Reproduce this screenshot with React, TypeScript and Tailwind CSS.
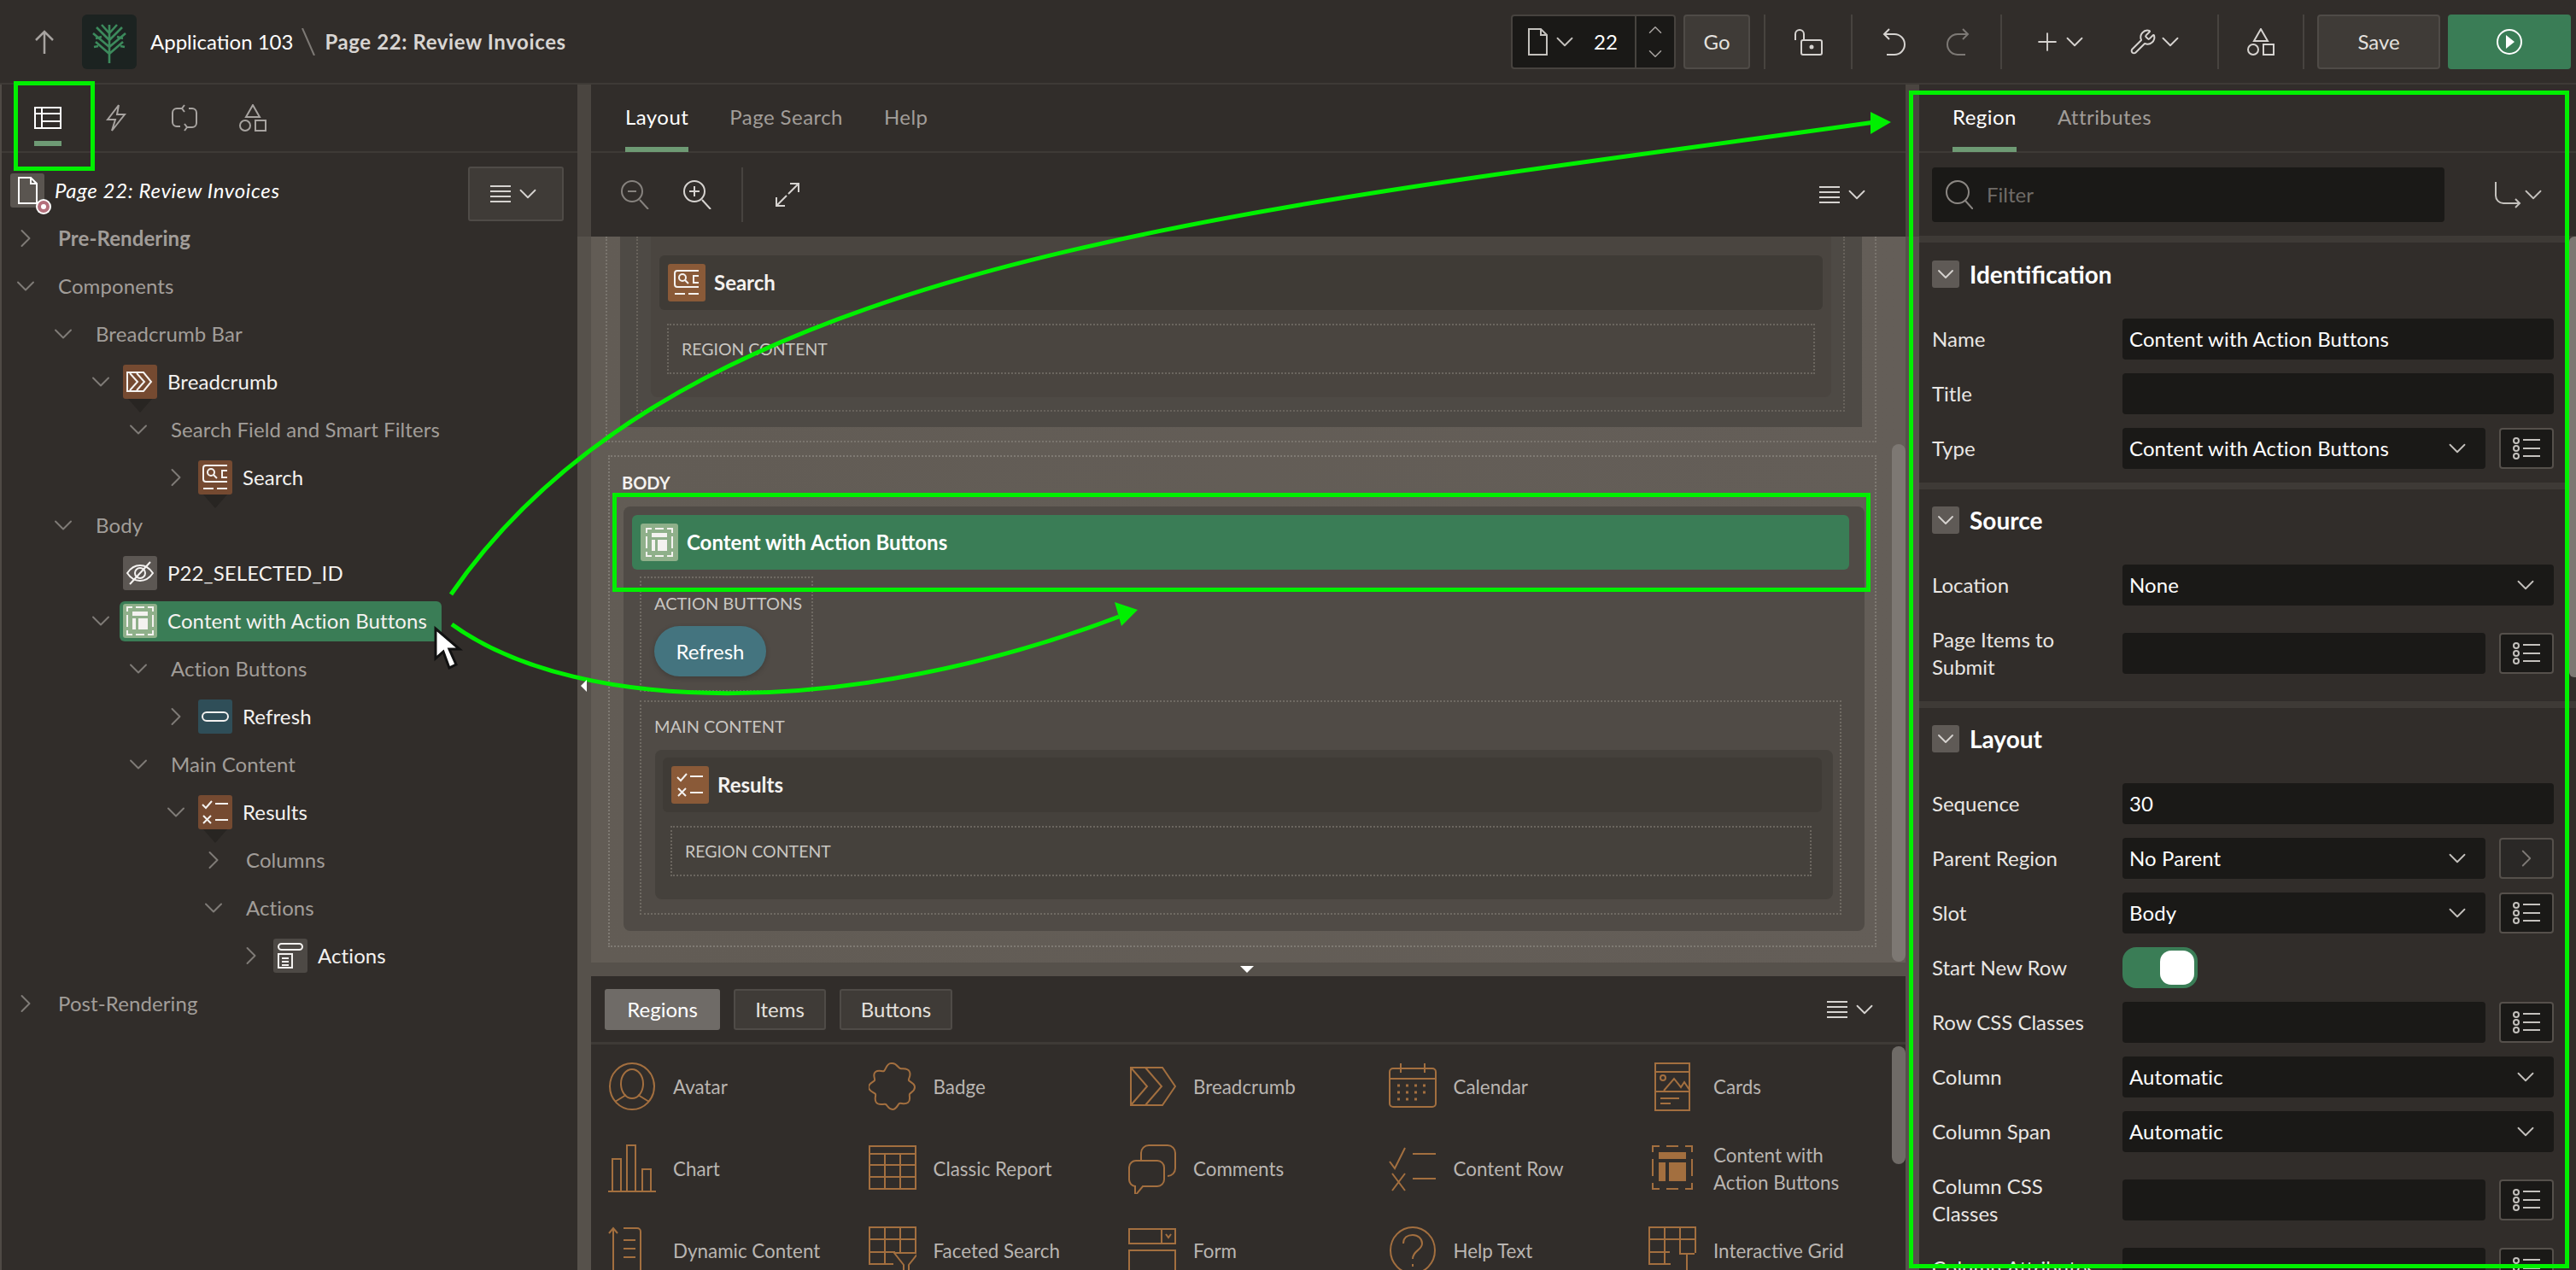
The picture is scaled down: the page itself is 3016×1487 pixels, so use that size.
// App.tsx — page designer screen: toolbar, tree, layout canvas, property editor
import type { ReactNode } from 'react';
import { ChevronDown, ChevronRight, ChevronUp, Plus, Wrench } from 'lucide-react';

const FONT = 'font-["Lato","Noto_Sans",sans-serif]';

function Svg({ w, h, vb, className, children }: { w: number; h: number; vb: string; className?: string; children: ReactNode }) {
  return (
    <svg width={w} height={h} viewBox={vb} fill="none" stroke="currentColor" strokeWidth={2} className={className}>
      {children}
    </svg>
  );
}

function Lines({ className }: { className?: string }) {
  return (
    <Svg w={24} h={22} vb="0 0 24 22" className={className}>
      <path d="M0 2h24M0 8h24M0 14h24M0 20h24" />
    </Svg>
  );
}

function MenuIcon() {
  return (
    <span className="flex items-center gap-[3px] text-[#d6d3d0]">
      <Lines />
      <ChevronDown size={34} strokeWidth={1.3} />
    </span>
  );
}

function ListIcon() {
  return (
    <Svg w={32} h={26} vb="0 0 32 26" className="text-[#c4c1bd]">
      <circle cx="4" cy="4" r="3" />
      <circle cx="4" cy="13" r="3" />
      <circle cx="4" cy="22" r="3" />
      <path d="M12 3h20M12 13h20M12 22h20" />
    </Svg>
  );
}

function PageIcon({ className, w = 24, h = 32 }: { className?: string; w?: number; h?: number }) {
  return (
    <Svg w={w} h={h} vb="0 0 24 32" className={className}>
      <path d="M2 1h14l7 7v23H2zM16 1v7h7" />
    </Svg>
  );
}

function ShapesIcon({ className, w = 32, h = 32 }: { className?: string; w?: number; h?: number }) {
  return (
    <Svg w={w} h={h} vb="0 0 32 32" className={className}>
      <path d="M16 1l8 14H8z" />
      <circle cx="7" cy="25" r="6" />
      <rect x="19" y="19" width="12" height="12" />
    </Svg>
  );
}

/* tile icons used in the tree and on the canvas */
function BreadcrumbGlyph() {
  return (
    <Svg w={32} h={26} vb="0 0 32 26">
      <path d="M1 2h19l9 11-9 11H1zM4 3l9 10-9 10M12 3l9 10-9 10" />
    </Svg>
  );
}
function SearchGlyph() {
  return (
    <Svg w={32} h={32} vb="0 0 32 32">
      <path d="M30 2H5a3 3 0 0 0-3 3v13a3 3 0 0 0 3 3h25M2 29h12M18 29h12M30 8h-6v8h6" />
      <circle cx="11" cy="10" r="4" />
      <path d="M14 13l4 4" />
    </Svg>
  );
}
function ResultsGlyph() {
  return (
    <Svg w={32} h={30} vb="0 0 32 30">
      <path d="M1 6l4 4 7-8M16 5h15M2 19l9 9M11 19l-9 9M16 24h15" />
    </Svg>
  );
}
function ContentGlyph() {
  return (
    <Svg w={32} h={34} vb="0 0 32 34">
      <path d="M1 6V1h6M11 1h10M25 1h6v5M31 10v14M31 28v5h-6M21 33H11M7 33H1v-5M1 24V10" />
      <rect x="7" y="6" width="18" height="5" fill="currentColor" stroke="none" />
      <rect x="7" y="14" width="4" height="13" fill="currentColor" stroke="none" />
      <rect x="14" y="14" width="11" height="13" fill="currentColor" stroke="none" />
    </Svg>
  );
}
function EyeOffGlyph() {
  return (
    <Svg w={32} h={28} vb="0 0 32 28">
      <path d="M1 14c4-6 9-9 15-9s11 3 15 9c-4 6-9 9-15 9S5 20 1 14z" />
      <circle cx="16" cy="14" r="6" />
      <path d="M4 27L28 1" />
    </Svg>
  );
}
function PillGlyph() {
  return (
    <Svg w={32} h={12} vb="0 0 32 12">
      <rect x="1" y="1" width="30" height="10" rx="5" />
    </Svg>
  );
}
function ActionsGlyph() {
  return (
    <Svg w={30} h={30} vb="0 0 30 30">
      <rect x="1" y="1" width="28" height="7" rx="3.5" />
      <path d="M1 13h16v16H1zM5 18h8M5 22h8M5 26h8" />
    </Svg>
  );
}

function Tile({ bg, children, size = 'w-[40px] h-[40px]', tail }: { bg: string; children: ReactNode; size?: string; tail?: boolean }) {
  return (
    <span className={`relative flex shrink-0 items-center justify-center rounded-[3px] text-[#f4f2f0] ${bg} ${size}`}>
      {children}
      {tail && <span className="absolute left-[6px] top-full h-0 w-0 border-x-[14px] border-t-[16px] border-x-transparent border-t-[#282522]" />}
    </span>
  );
}

type Node = {
  label: string;
  level: number;
  open?: boolean;
  icon?: ReactNode;
  tile?: string;
  tail?: boolean;
  tone?: string;
  selected?: boolean;
};

const BROWN = 'bg-[#754a31]';

const TREE: Node[] = [
  { label: 'Pre-Rendering', level: 0, open: false, tone: 'font-bold text-[#a19d99]' },
  { label: 'Components', level: 0, open: true },
  { label: 'Breadcrumb Bar', level: 1, open: true },
  { label: 'Breadcrumb', level: 2, open: true, icon: <BreadcrumbGlyph />, tile: BROWN, tail: true },
  { label: 'Search Field and Smart Filters', level: 3, open: true },
  { label: 'Search', level: 4, open: false, icon: <SearchGlyph />, tile: BROWN, tail: true },
  { label: 'Body', level: 1, open: true },
  { label: 'P22_SELECTED_ID', level: 2, icon: <EyeOffGlyph />, tile: 'bg-[#5c5753]' },
  { label: 'Content with Action Buttons', level: 2, open: true, icon: <ContentGlyph />, tile: 'bg-[#8fb08a]', selected: true },
  { label: 'Action Buttons', level: 3, open: true },
  { label: 'Refresh', level: 4, open: false, icon: <PillGlyph />, tile: 'bg-[#2f4e58]' },
  { label: 'Main Content', level: 3, open: true },
  { label: 'Results', level: 4, open: true, icon: <ResultsGlyph />, tile: BROWN, tail: true },
  { label: 'Columns', level: 5, open: false },
  { label: 'Actions', level: 5, open: true },
  { label: 'Actions', level: 6, open: false, icon: <ActionsGlyph />, tile: 'bg-[#4d4945]' },
  { label: 'Post-Rendering', level: 0, open: false },
];

function TreeRow({ node }: { node: Node }) {
  return (
    <div className="flex h-[56px] items-center tracking-[0.1px]" style={{ paddingLeft: 6 + node.level * 44 }}>
      <span className="flex w-[44px] shrink-0 justify-center text-[#7f7b77]">
        {node.open === true && <ChevronDown size={36} strokeWidth={1.3} />}
        {node.open === false && <ChevronRight size={36} strokeWidth={1.3} />}
      </span>
      {node.icon ? (
        <span className={`flex h-[47px] items-center gap-[12px] rounded-[6px] pl-[4px] pr-[17px] ${node.selected ? 'bg-[#3a7d56]' : ''}`}>
          <Tile bg={node.tile ?? ''} tail={node.tail}>{node.icon}</Tile>
          <span className="whitespace-nowrap text-[#f4f2f0]">{node.label}</span>
        </span>
      ) : (
        <span className={`whitespace-nowrap pl-[16px] ${node.tone ?? 'text-[#a19d99]'}`}>{node.label}</span>
      )}
    </div>
  );
}

function Tabs({ items, className }: { items: string[]; className?: string }) {
  return (
    <div className={`flex h-[80px] shrink-0 gap-[48px] border-b-2 border-[#3e3a36] tracking-[0.45px] ${className ?? ''}`}>
      {items.map((t, i) => (
        <span key={t} className={`flex h-[79px] items-center border-b-[6px] pt-[3px] ${i === 0 ? 'border-[#6e9a74] text-white' : 'border-transparent text-[#a19d99]'}`}>
          {t}
        </span>
      ))}
    </div>
  );
}

function LeftPanel() {
  return (
    <div className="flex w-[676px] shrink-0 flex-col border-l-2 border-[#4f4a45]">
      <div className="flex h-[80px] shrink-0 items-center gap-[52px] border-b-2 border-[#3e3a36] pl-[38px] text-[#a7a3a0]">
        <span className="relative flex h-[32px] w-[32px] items-center justify-center text-white">
          <Svg w={32} h={26} vb="0 0 32 26">
            <path d="M1 1h30v24H1zM9 1v24M1 8h30M9 17h22" />
          </Svg>
          <span className="absolute left-0 top-[43px] h-[6px] w-[32px] bg-[#6e9a74]" />
        </span>
        <Svg w={24} h={32} vb="0 0 24 32">
          <path d="M15 1L2 18h9l-4 13 15-19h-9z" />
        </Svg>
        <Svg w={32} h={32} vb="0 0 32 32">
          <path d="M14 5H7a5 5 0 0 0-5 5v11a5 5 0 0 0 5 5h4M18 27h7a5 5 0 0 0 5-5V10a5 5 0 0 0-5-5h-4M16 1l-3 4 3 4M16 23l3 4-3 4" />
        </Svg>
        <ShapesIcon className="-ml-[4px]" />
      </div>
      <div className="flex h-[72px] shrink-0 items-start justify-between pl-[10px] pr-[16px]">
        <span className="mt-[24px] flex items-center gap-[12px]">
          <span className="relative flex h-[40px] w-[40px] items-center justify-center rounded-[3px] bg-[#5a5550] text-white">
            <PageIcon w={24} h={32} />
            <span className="absolute -bottom-[8px] -right-[8px] flex h-[18px] w-[18px] items-center justify-center rounded-full bg-white">
              <span className="flex h-[14px] w-[14px] items-center justify-center rounded-full bg-[#b4707c]">
                <span className="h-[6px] w-[6px] rounded-full bg-white" />
              </span>
            </span>
          </span>
          <span className="italic tracking-[0.66px] text-white">Page 22: Review Invoices</span>
        </span>
        <span className="mt-[16px] flex h-[64px] w-[112px] items-center justify-center rounded-[3px] border-2 border-[#4f4b47] bg-[#3f3b37]">
          <MenuIcon />
        </span>
      </div>
      <div>
        {TREE.map((n, i) => (
          <TreeRow key={i} node={n} />
        ))}
      </div>
    </div>
  );
}

function Gutter({ children }: { children?: ReactNode }) {
  return (
    <div className="flex w-[16px] shrink-0 flex-col bg-[#56514b]">
      <div className="h-[178px] bg-[#4a4540]" />
      {children}
    </div>
  );
}

function RegionCard({ icon, title, contentClass }: { icon: ReactNode; title: string; contentClass?: string }) {
  return (
    <>
      <div className="flex h-[64px] items-center gap-[10px] rounded-[6px] bg-[#3f3b36] pl-[10px] text-[24px] font-bold text-[#f4f2f0]">
        <Tile bg="bg-[#8a5a38]" size="w-[44px] h-[44px]">{icon}</Tile>
        {title}
      </div>
      <div className={`ml-[9px] mt-[16px] flex h-[59px] items-center border-2 border-dotted border-[#6b665f] pl-[15px] text-[19.5px] text-[#c9c6c2] ${contentClass ?? ''}`}>
        REGION CONTENT
      </div>
    </>
  );
}

function Canvas() {
  return (
    <div className="relative h-[850px] overflow-hidden bg-gradient-to-r from-[#625c55] to-[#645e58]">
      {/* section above the body, scrolled off at the top */}
      <div className="ml-[17px] h-[241px] w-[1488px] border-x-2 border-b-2 border-dotted border-[#7a756e] px-[15px]">
        <div className="h-[223px] bg-[#4e4a45] pl-[19px] pr-[20px]">
          <div className="h-[205px] border-x-2 border-b-2 border-dotted border-[#68635c] pl-[15px] pr-[14px]">
            <div className="h-[188px] rounded-b-[8px] bg-[#4a4540] px-[10px] pt-[22px] pb-[8px]">
              <RegionCard icon={<SearchGlyph />} title="Search" contentClass="mr-[9px]" />
            </div>
          </div>
        </div>
      </div>
      {/* body */}
      <div className="ml-[20px] mt-[15px] h-[576px] w-[1485px] border-2 border-dotted border-[#7f7a73] pl-[16px] pr-[12px]">
        <div className="-ml-[2px] flex h-[58px] items-center pt-[2px] text-[20px] font-bold text-[#f4f2f0]">BODY</div>
        <div className="h-[497px] rounded-[8px] bg-[#504b46] pl-[10px] pr-[18px] pt-[10px]">
          <div className="flex h-[64px] items-center gap-[10px] rounded-[6px] bg-[#3a7d56] pl-[10px] text-[24px] font-bold text-white">
            <Tile bg="bg-[#8fb08a]" size="w-[44px] h-[44px]"><ContentGlyph /></Tile>
            Content with Action Buttons
          </div>
          <div className="ml-[9px] mt-[8px] flex h-[135px] w-[203px] flex-col border-2 border-dotted border-[#6f6a63] pl-[15px] pt-[17px]">
            <span className="whitespace-nowrap text-[20px] leading-[24px] text-[#c9c6c2]">ACTION BUTTONS</span>
            <span className="mt-[15px] flex h-[59px] w-[131px] items-center justify-center rounded-[30px] bg-[#44747f] text-white shadow-[0_2px_6px_rgba(0,0,0,0.2)]">
              Refresh
            </span>
          </div>
          <div className="ml-[9px] mr-[9px] mt-[10px] h-[251px] border-2 border-dotted border-[#6f6a63] pl-[16px] pr-[8px]">
            <div className="-ml-[1px] flex h-[56px] items-center text-[20px] text-[#c9c6c2]">MAIN CONTENT</div>
            <div className="h-[175px] rounded-[8px] bg-[#45413c] pl-[9px] pr-[13px] pt-[9px]">
              <RegionCard icon={<ResultsGlyph />} title="Results" contentClass="mr-[12px]" />
            </div>
          </div>
        </div>
      </div>
      {/* scrollbar */}
      <span className="absolute right-0 top-[243px] h-[606px] w-[16px] rounded-full bg-[#7d7873]" />
    </div>
  );
}

/* palette icons, all 56 wide in #a36f3f */
const PALETTE: { name: ReactNode; icon: ReactNode }[] = [
  { name: 'Avatar', icon: <><ellipse cx="28" cy="28" rx="26" ry="27" /><ellipse cx="28" cy="25" rx="13" ry="17" /><path d="M8 46l13-8M48 46l-13-8" /></> },
  { name: 'Badge', icon: <path d="M28 1c5 0 6 5 9 6s9-1 11 4-2 8-1 10 7 3 7 8-5 6-6 8 2 7-2 10-8 0-10 1-3 7-8 7-6-5-8-6-8 2-11-2 0-8-1-10-8-3-8-8 6-6 7-8-3-7 1-10 8 0 10-1 3-9 8-9z" /> },
  { name: 'Breadcrumb', icon: <path d="M3 6h37l15 22-15 22H3zM3 6l19 22-19 22M20 6l19 22-19 22" /> },
  { name: 'Calendar', icon: <><rect x="1" y="7" width="54" height="45" rx="4" /><path d="M1 19h54M14 1v11M42 1v11" /><path d="M10 27h38M10 35h38M10 43h26" strokeDasharray="3 7" strokeWidth="3" /></> },
  { name: 'Cards', icon: <><rect x="8" y="1" width="40" height="55" /><path d="M8 11h40M8 34h40M14 42h22M14 48h12M18 33l12-14 8 10 4-6 6 9" /><circle cx="17" cy="18" r="3" /></> },
  { name: 'Chart', icon: <path d="M0 55h56M5 54V17h10v37M22 54V1h10v53M40 54V29h10v25" /> },
  { name: 'Classic Report', icon: <path d="M1 2h54v50H1zM1 11h54M1 24h54M1 38h54M19 11v41M37 11v41" /> },
  { name: 'Comments', icon: <path d="M15 18v-8a9 9 0 0 1 9-9h22a9 9 0 0 1 9 9v18a9 9 0 0 1-9 9M10 19h24a8 8 0 0 1 8 8v14a8 8 0 0 1-8 8H17l-9 11v-11a8 8 0 0 1-7-8V27a8 8 0 0 1 9-8z" /> },
  { name: 'Content Row', icon: <path d="M1 20l6 8L19 4M28 11h27M4 34l15 20M19 34L4 54M28 40h27" /> },
  { name: <>Content with<br />Action Buttons</>, icon: <><path d="M5 9V2h8M21 2h14M43 2h8v7M51 17v20M51 45v7h-8M35 52H21M13 52H5v-7M5 37V17" /><rect x="12" y="9" width="32" height="8" fill="currentColor" stroke="none" /><rect x="12" y="21" width="8" height="22" fill="currentColor" stroke="none" /><rect x="24" y="21" width="20" height="22" fill="currentColor" stroke="none" /></> },
  { name: 'Dynamic Content', icon: <path d="M6 2v54M1 8l5-6 5 6M18 2h16a4 4 0 0 1 4 4v50M51 60l-5-6M18 16h14M18 26h14M18 36h14" /> },
  { name: 'Faceted Search', icon: <path d="M29 44H1V1h54v30M1 15h54M19 1v43M37 1v30M1 30h30M30 31h28L47 45v12l-6 3V45z" /> },
  { name: 'Form', icon: <path d="M1 3h54v17H1zM39 3v17M44 9l3 4 3-4M1 28h54v30H1z" /> },
  { name: 'Help Text', icon: <><ellipse cx="28" cy="28" rx="26" ry="27" /><path d="M17 20c0-7 5-10 11-10s11 4 11 10c0 8-11 8-11 18M28 44v3" /></> },
  { name: 'Interactive Grid', icon: <path d="M26 44H1V1h54v30M1 15h54M19 1v43M37 1v30M1 30h24M36 32h18M45 32v25M38 58h14" /> },
];

function Palette() {
  return (
    <div className="flex h-[344px] flex-col overflow-hidden">
      <div className="flex h-[80px] shrink-0 items-center justify-between border-b-[3px] border-[#3e3a36] pl-[16px] pr-[31px]">
        <div className="flex gap-[16px]">
          <span className="flex h-[48px] w-[135px] items-center justify-center rounded-[3px] bg-[#6f6b67] text-white">Regions</span>
          <span className="flex h-[48px] w-[108px] items-center justify-center rounded-[3px] border-2 border-[#4f4b47] bg-[#3f3b37] text-[#e4e1de]">Items</span>
          <span className="flex h-[48px] w-[132px] items-center justify-center rounded-[3px] border-2 border-[#4f4b47] bg-[#3f3b37] text-[#e4e1de]">Buttons</span>
        </div>
        <MenuIcon />
      </div>
      <div className="relative grid grid-cols-[repeat(5,304.5px)] pt-[2px] text-[22.4px]">
        {PALETTE.map((p, i) => (
          <div key={i} className="flex h-[96px] items-center gap-[20px] pl-[20px] text-[#b9b5b1]">
            <Svg w={56} h={58} vb="0 0 56 58" className="shrink-0 text-[#a36f3f]">{p.icon}</Svg>
            <span className="leading-[32px]">{p.name}</span>
          </div>
        ))}
        <span className="absolute right-0 top-[2px] h-[138px] w-[16px] rounded-full bg-[#6f6b67]" />
      </div>
    </div>
  );
}

function CenterPanel() {
  return (
    <div className="flex w-[1539px] shrink-0 flex-col">
      <Tabs items={['Layout', 'Page Search', 'Help']} className="pl-[40px]" />
      <div className="flex h-[98px] shrink-0 items-center justify-between pl-[35px] pr-[40px] text-[#d6d3d0]">
        <div className="flex items-center">
          <Svg w={33} h={34} vb="0 0 33 34" className="text-[#86827e]">
            <circle cx="13" cy="13" r="12" />
            <path d="M8 13h10M22 23l10 11" />
          </Svg>
          <Svg w={33} h={34} vb="0 0 33 34" className="ml-[40px]">
            <circle cx="13" cy="13" r="12" />
            <path d="M7 13h12M13 7v12M22 23l10 11" />
          </Svg>
          <span className="ml-[35px] h-[64px] w-[2px] bg-[#47433f]" />
          <Svg w={28} h={28} vb="0 0 28 28" className="ml-[38px]">
            <path d="M17 1h10v10M27 1L15 13M1 17v10h10M1 27l12-12" />
          </Svg>
        </div>
        <MenuIcon />
      </div>
      <Canvas />
      <div className="flex h-[16px] shrink-0 items-center bg-[#56514b] pl-[760px]">
        <span className="h-0 w-0 border-x-[8px] border-t-[8px] border-x-transparent border-t-white" />
      </div>
      <Palette />
    </div>
  );
}

const FIELD = 'flex h-[48px] items-center rounded-[4px] bg-[#1a1917] pl-[8px] tracking-[0.1px] text-white';

function Prop({ label, value, kind, side, tall }: { label: string; value?: string; kind?: 'select'; side?: 'list' | 'next'; tall?: boolean }) {
  return (
    <div className={`flex items-center ${tall ? 'h-[80px]' : 'h-[48px]'}`}>
      <span className={`w-[223px] shrink-0 whitespace-normal leading-[32px] text-[#e9e6e3] ${tall ? 'pr-[50px]' : ''}`}>{label}</span>
      <span className={`${FIELD} min-w-0 flex-1 justify-between pr-[16px]`}>
        {value}
        {kind === 'select' && <ChevronDown size={34} strokeWidth={1.3} className="text-[#c4c1bd]" />}
      </span>
      {side && (
        <span className={`ml-[16px] flex h-[48px] w-[64px] shrink-0 items-center justify-center rounded-[4px] border-2 border-[#55504b] ${side === 'next' ? 'bg-[#2a2826]' : 'bg-[#1a1917]'}`}>
          {side === 'list' ? <ListIcon /> : <ChevronRight size={34} strokeWidth={1.3} className="text-[#7d7975]" />}
        </span>
      )}
    </div>
  );
}

function SectionHead({ title }: { title: string }) {
  return (
    <div className="flex h-[32px] items-center gap-[12px]">
      <span className="flex h-[32px] w-[32px] items-center justify-center rounded-[3px] bg-[#5f5a56] text-[#d6d3d0]">
        <ChevronDown size={32} strokeWidth={1.4} />
      </span>
      <span className="text-[28px] font-bold text-white">{title}</span>
    </div>
  );
}

function Section({ title, first, children }: { title: string; first?: boolean; children: ReactNode }) {
  return (
    <div className={`border-t-[8px] border-[#3e3a36] pb-[16px] pl-[15px] pr-[26px] ${first ? 'pt-[21px]' : 'pt-[20px]'}`}>
      <SectionHead title={title} />
      <div className="mt-[36px] flex flex-col gap-[16px]">{children}</div>
    </div>
  );
}

function RightPanel() {
  return (
    <div className="relative flex min-w-0 flex-1 flex-col">
      <Tabs items={['Region', 'Attributes']} className="pl-[39px]" />
      <div className="flex h-[97px] shrink-0 items-center justify-between pl-[15px] pr-[33px]">
        <span className="flex h-[64px] w-[600px] items-center gap-[16px] rounded-[4px] bg-[#1a1917] pl-[16px] text-[#6f6b67]">
          <Svg w={32} h={34} vb="0 0 32 34" className="text-[#8b8783]">
            <circle cx="14" cy="14" r="13" />
            <path d="M23 24l9 10" />
          </Svg>
          Filter
        </span>
        <span className="flex items-center text-[#c4c1bd]">
          <Svg w={32} h={32} vb="0 0 32 32">
            <path d="M2 1v16a9 9 0 0 0 9 9h19M25 21l5 5-5 5" />
          </Svg>
          <ChevronDown size={34} strokeWidth={1.3} className="-ml-[3px]" />
        </span>
      </div>
      <Section title="Identification" first>
        <Prop label="Name" value="Content with Action Buttons" />
        <Prop label="Title" />
        <Prop label="Type" value="Content with Action Buttons" kind="select" side="list" />
      </Section>
      <Section title="Source">
        <Prop label="Location" value="None" kind="select" />
        <Prop label="Page Items to Submit" side="list" tall />
      </Section>
      <Section title="Layout">
        <Prop label="Sequence" value="30" />
        <Prop label="Parent Region" value="No Parent" kind="select" side="next" />
        <Prop label="Slot" value="Body" kind="select" side="list" />
        <div className="flex h-[48px] items-center">
          <span className="w-[223px] shrink-0 text-[#e9e6e3]">Start New Row</span>
          <span className="flex h-[48px] w-[88px] items-center justify-end rounded-[16px] bg-[#3a7d56] pr-[4px]">
            <span className="h-[40px] w-[40px] rounded-[13px] bg-white" />
          </span>
        </div>
        <Prop label="Row CSS Classes" side="list" />
        <Prop label="Column" value="Automatic" kind="select" />
        <Prop label="Column Span" value="Automatic" kind="select" />
        <Prop label="Column CSS Classes" side="list" tall />
        <Prop label="Column Attributes" side="list" />
      </Section>
      <span className="absolute right-0 top-[178px] h-[516px] w-[8px] rounded-l-[6px] bg-[#7d7873]" />
    </div>
  );
}

function Sep({ className }: { className?: string }) {
  return <span className={`h-[64px] w-[2px] shrink-0 bg-[#47433f] ${className ?? ''}`} />;
}

function Header() {
  return (
    <div className="flex h-[99px] shrink-0 items-center border-b-2 border-[#3e3a36] text-[#e4e1de]">
      <Svg w={24} h={28} vb="0 0 24 28" className="ml-[40px] text-[#a7a3a0]">
        <path d="M12 28V2M2 12L12 2l10 10" strokeWidth="2.5" />
      </Svg>
      <span className="ml-[32px] flex h-[64px] w-[64px] items-center justify-center rounded-[6px] bg-[#1c2321] text-[#3c8a5c]">
        <Svg w={44} h={52} vb="0 0 44 52">
          <path strokeWidth="2.6" d="M22 51V6M22 40L6 26M22 40l16-14M22 32L3 16M22 32l19-16M22 24L7 9M22 24L37 9M22 16l-9-10M22 16l9-10M9 31l-5 1M35 31l5 1M13 20l-7 2M31 20l7 2" />
        </Svg>
      </span>
      <span className="ml-[16px] whitespace-nowrap text-white">Application 103</span>
      <Svg w={16} h={32} vb="0 0 16 32" className="ml-[10px] text-[#7d7975]">
        <path d="M1 0l14 32" />
      </Svg>
      <span className="ml-[11px] whitespace-nowrap font-bold tracking-[0.6px] text-[#d8d5d2]">Page 22: Review Invoices</span>
      <div className="flex-1" />
      <span className="flex h-[64px] w-[193px] items-center rounded-[4px] border-2 border-[#47433f] bg-[#1a1917]">
        <PageIcon className="ml-[17px] text-[#c4c1bd]" />
        <ChevronDown size={34} strokeWidth={1.3} className="ml-[3px] text-[#c4c1bd]" />
        <span className="ml-[17px] w-[32px] text-white">22</span>
        <span className="ml-[16px] flex h-full w-[46px] flex-col items-center justify-center gap-[2px] border-l-2 border-[#47433f] text-[#a7a3a0]">
          <ChevronUp size={26} strokeWidth={1.4} />
          <ChevronDown size={26} strokeWidth={1.4} />
        </span>
      </span>
      <span className="ml-[9px] flex h-[64px] w-[78px] items-center justify-center rounded-[4px] border-2 border-[#4f4b47] bg-[#3f3b37] text-[#e4e1de]">Go</span>
      <Sep className="ml-[16px]" />
      <Svg w={34} h={32} vb="0 0 34 32" className="ml-[33px] text-[#d6d3d0]">
        <path d="M2 14V7a5 5 0 0 1 10 0v7" />
        <rect x="9" y="14" width="24" height="17" rx="2" />
        <circle cx="21" cy="22" r="1.5" fill="currentColor" />
      </Svg>
      <Sep className="ml-[33px]" />
      <Svg w={32} h={32} vb="0 0 32 32" className="ml-[35px] text-[#d6d3d0]">
        <path d="M8 1L2 7l6 6M3 7h11a12 12 0 0 1 0 24H5" />
      </Svg>
      <Svg w={32} h={32} vb="0 0 32 32" className="ml-[38px] text-[#7d7975]">
        <path d="M24 1l6 6-6 6M29 7H18a12 12 0 0 0 0 24h9" />
      </Svg>
      <Sep className="ml-[36px]" />
      <Plus size={34} strokeWidth={1.3} className="ml-[36px] text-[#d6d3d0]" />
      <ChevronDown size={34} strokeWidth={1.3} className="-ml-[2px] text-[#d6d3d0]" />
      <Wrench size={32} strokeWidth={1.5} className="ml-[47px] text-[#d6d3d0]" />
      <ChevronDown size={34} strokeWidth={1.3} className="-ml-[1px] text-[#d6d3d0]" />
      <Sep className="ml-[38px]" />
      <ShapesIcon className="ml-[33px] text-[#d6d3d0]" />
      <Sep className="ml-[33px]" />
      <span className="ml-[15px] flex h-[64px] w-[144px] items-center justify-center rounded-[4px] border-2 border-[#4f4b47] bg-[#3f3b37] text-[#e4e1de]">Save</span>
      <span className="ml-[9px] mr-[6px] flex h-[64px] w-[144px] items-center justify-center rounded-[4px] bg-[#3a7d56] text-white">
        <Svg w={32} h={32} vb="0 0 32 32">
          <circle cx="16" cy="16" r="14" />
          <path d="M12 8l10 8-10 8z" fill="currentColor" stroke="none" />
        </Svg>
      </span>
    </div>
  );
}

/* green annotations drawn on top of the screenshot */
function Annotations() {
  const green = '#00f000';
  return (
    <>
      <span className="absolute left-[16px] top-[95px] h-[105px] w-[95px] border-[5px] border-[#00f000]" />
      <span className="absolute left-[717px] top-[577px] h-[116px] w-[1473px] border-[5px] border-[#00f000]" />
      <span className="absolute left-[2235px] top-[106px] h-[1379px] w-[773px] border-[5px] border-[#00f000]" />
      <svg className="pointer-events-none absolute left-0 top-0" width={3016} height={1487} viewBox="0 0 3016 1487" fill="none">
        <path d="M528 696C800 300 1450 248 2195 143" stroke={green} strokeWidth={5} />
        <path d="M2214 143L2190 131V157z" fill={green} />
        <path d="M529 731C680 840 1000 840 1310 722" stroke={green} strokeWidth={5} />
        <path d="M1332 714L1305 705L1313 733z" fill={green} />
        <path d="M510 736V771L519 763L526 782L534 778L526 760L538 760z" fill="#fff" stroke="#111" strokeWidth={3} />
        <path d="M687 796V810L680 803z" fill="#fff" />
      </svg>
    </>
  );
}

export default function App() {
  return (
    <div className={`relative flex h-[1487px] w-[3016px] flex-col overflow-hidden bg-[#312d2a] text-[24px] ${FONT}`}>
      <Header />
      <div className="flex min-h-0 flex-1">
        <LeftPanel />
        <Gutter />
        <CenterPanel />
        <Gutter />
        <RightPanel />
      </div>
      <Annotations />
    </div>
  );
}
